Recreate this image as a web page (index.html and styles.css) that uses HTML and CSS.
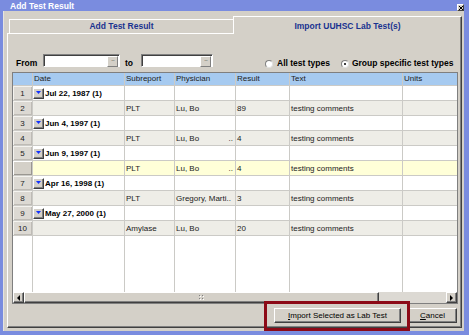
FILE: index.html
```html
<!DOCTYPE html>
<html>
<head>
<meta charset="utf-8">
<title>Add Test Result</title>
<link rel="stylesheet" href="styles.css">
</head>
<body>
<div class="window">
  <div class="titlebar">
    <span class="title">Add Test Result</span>
    <span class="close"><svg width="4" height="4" viewBox="0 0 4 4"><path d="M0 0L4 4M4 0L0 4" stroke="#000" stroke-width="1"/></svg></span>
  </div>
  <div class="body">
    <div class="tabs">
      <div class="tab">Add Test Result</div>
      <div class="tab active">Import UUHSC Lab Test(s)</div>
    </div>
    <div class="panel">
      <div class="filter">
        <span class="lbl from">From</span>
        <span class="datebox w77"><span class="dots">...</span></span>
        <span class="lbl to">to</span>
        <span class="datebox w72"><span class="dots">...</span></span>
        <span class="radio r1"></span><span class="lbl l1">All test types</span>
        <span class="radio r2 on"></span><span class="lbl l2">Group specific test types</span>
      </div>
      <div class="grid">
        <div class="row head">
          <div class="num"></div><div>Date</div><div>Subreport</div><div>Physician</div><div>Result</div><div>Text</div><div>Units</div>
        </div>
        <div class="row grp">
          <div class="num">1</div><div class="date"><span class="dd"><svg width="5" height="3" viewBox="0 0 5 3"><polygon points="0,0 5,0 2.5,3" fill="#1030ff"/></svg></span><b>Jul 22, 1987 (1)</b></div><div></div><div></div><div></div><div></div><div></div>
        </div>
        <div class="row alt">
          <div class="num">2</div><div></div><div>PLT</div><div>Lu, Bo</div><div>89</div><div>testing comments</div><div></div>
        </div>
        <div class="row grp">
          <div class="num">3</div><div class="date"><span class="dd"><svg width="5" height="3" viewBox="0 0 5 3"><polygon points="0,0 5,0 2.5,3" fill="#1030ff"/></svg></span><b>Jun 4, 1997 (1)</b></div><div></div><div></div><div></div><div></div><div></div>
        </div>
        <div class="row alt">
          <div class="num">4</div><div></div><div>PLT</div><div class="phys"><span>Lu, Bo</span><span>..</span></div><div>4</div><div>testing comments</div><div></div>
        </div>
        <div class="row grp">
          <div class="num">5</div><div class="date"><span class="dd"><svg width="5" height="3" viewBox="0 0 5 3"><polygon points="0,0 5,0 2.5,3" fill="#1030ff"/></svg></span><b>Jun 9, 1997 (1)</b></div><div></div><div></div><div></div><div></div><div></div>
        </div>
        <div class="row sel">
          <div class="num"></div><div></div><div>PLT</div><div class="phys"><span>Lu, Bo</span><span>..</span></div><div>4</div><div>testing comments</div><div></div>
        </div>
        <div class="row grp">
          <div class="num">7</div><div class="date"><span class="dd"><svg width="5" height="3" viewBox="0 0 5 3"><polygon points="0,0 5,0 2.5,3" fill="#1030ff"/></svg></span><b>Apr 16, 1998 (1)</b></div><div></div><div></div><div></div><div></div><div></div>
        </div>
        <div class="row alt">
          <div class="num">8</div><div></div><div>PLT</div><div>Gregory, Marti..</div><div>3</div><div>testing comments</div><div></div>
        </div>
        <div class="row grp">
          <div class="num">9</div><div class="date"><span class="dd"><svg width="5" height="3" viewBox="0 0 5 3"><polygon points="0,0 5,0 2.5,3" fill="#1030ff"/></svg></span><b>May 27, 2000 (1)</b></div><div></div><div></div><div></div><div></div><div></div>
        </div>
        <div class="row alt">
          <div class="num">10</div><div></div><div>Amylase</div><div>Lu, Bo</div><div>20</div><div>testing comments</div><div></div>
        </div>
        <div class="filler">
          <div></div><div></div><div></div><div></div><div></div><div></div><div></div>
        </div>
        <div class="hscroll">
          <span class="sbtn"><span class="tri-l"></span></span>
          <span class="thumb"><svg width="5" height="6" viewBox="0 0 5 6"><rect x="0" y="0" width="1" height="1" fill="#808080"/><rect x="3" y="0" width="1" height="1" fill="#808080"/><rect x="0" y="3" width="1" height="1" fill="#808080"/><rect x="3" y="3" width="1" height="1" fill="#808080"/><rect x="1" y="1" width="1" height="1" fill="#fff"/><rect x="4" y="1" width="1" height="1" fill="#fff"/><rect x="1" y="4" width="1" height="1" fill="#fff"/><rect x="4" y="4" width="1" height="1" fill="#fff"/></svg></span>
          <span class="track"></span>
          <span class="sbtn"><span class="tri-r"></span></span>
        </div>
      </div>
      <div class="buttons">
        <div class="btn import"><u>I</u>mport Selected as Lab Test<span class="highlight"></span></div>
        <div class="btn cancel"><u>C</u>ancel</div>
      </div>
    </div>
  </div>
</div>
</body>
</html>
```

FILE: styles.css
```css
* { box-sizing: border-box; }
html, body { margin: 0; padding: 0; }
body {
  width: 469px;
  height: 335px;
  overflow: hidden;
  font-family: "Liberation Sans", Arial, sans-serif;
  font-size: 8px;
  color: #000;
  background: #7a8cdf;
}
.window {
  width: 469px;
  height: 335px;
  background: #7a8cdf;
  display: flex;
  flex-direction: column;
}
.titlebar {
  height: 11px;
  flex: none;
  display: flex;
  align-items: flex-start;
  padding: 0 5px 0 10px;
}
.title {
  color: #fff;
  font-weight: bold;
  font-size: 8.5px;
  line-height: 13px;
}
.close {
  margin-left: auto;
  margin-top: 4px;
  width: 7px;
  height: 7px;
  background: #d4d0c8;
  border: 1px solid;
  border-color: #fff #404040 #404040 #fff;
  display: flex;
  align-items: center;
  justify-content: center;
}
.body {
  flex: 1;
  min-height: 0;
  margin: 0 5px 4px 3px;
  background: #d4d0c8;
  padding: 5px 2px 3px 4px;
  display: flex;
  flex-direction: column;
  box-shadow: inset 1px 0 #e6e4df;
}
.tabs {
  height: 17px;
  flex: none;
  display: flex;
  align-items: flex-end;
  padding-left: 2px;
}
.tab {
  width: 224px;
  height: 14px;
  border-top: 1px solid #fff;
  border-left: 1px solid #fff;
  background: #d4d0c8;
  text-align: center;
  color: #1a3390;
  font-weight: bold;
  font-size: 8.5px;
  line-height: 12px;
  white-space: nowrap;
}
.tab.active {
  position: relative;
  width: 229px;
  height: 18px;
  margin-bottom: -1px;
  padding-top: 3px;
  border-right: 1px solid #404040;
  box-shadow: inset -1px 0 #808080;
}
.panel {
  flex: 1;
  min-height: 0;
  border: 1px solid;
  border-color: #fff #404040 #404040 #fff;
  box-shadow: inset -1px -1px #808080;
  padding: 20px 3px 4px 4px;
  display: flex;
  flex-direction: column;
}
.filter {
  height: 13px;
  flex: none;
  display: flex;
  align-items: flex-start;
  margin-bottom: 5px;
  padding-left: 4px;
}
.lbl {
  font-weight: bold;
  font-size: 8.5px;
  line-height: 14px;
  padding-top: 2px;
  white-space: nowrap;
}
.from { width: 27px; }
.to { margin-left: 5px; width: 16px; }
.datebox {
  height: 13px;
  background: #fff;
  border: 1px solid;
  border-color: #808080 #fff #fff #808080;
  box-shadow: inset 1px 1px #404040;
  display: flex;
  justify-content: flex-end;
  padding: 1px 1px 0 0;
}
.w77 { width: 77px; }
.w72 { width: 72px; }
.dots {
  width: 11px;
  height: 11px;
  background: #d4d0c8;
  border: 1px solid;
  border-color: #fff #808080 #808080 #fff;
  color: #707070;
  font-size: 7px;
  line-height: 4px;
  text-align: center;
  letter-spacing: -1px;
}
.radio {
  width: 8px;
  height: 8px;
  margin-top: 6px;
  border-radius: 50%;
  background: #fff;
  border: 1px solid;
  border-color: #808080 #e0e0e0 #e0e0e0 #808080;
  display: flex;
  align-items: center;
  justify-content: center;
}
.radio.on::after {
  content: "";
  width: 2px;
  height: 2px;
  background: #000;
  border-radius: 1px;
}
.r1 { margin-left: 52px; }
.l1 { margin-left: 4px; }
.r2 { margin-left: 11px; }
.l2 { margin-left: 3px; }
.grid {
  flex: 1;
  min-height: 0;
  border: 1px solid #7f7f7f;
  background: #fff;
  display: flex;
  flex-direction: column;
}
.row, .filler {
  display: grid;
  grid-template-columns: 20px 92px 50px 61px 54px 113px 54px;
}
.row {
  flex: none;
  height: 15px;
  border-bottom: 1px solid #cbcac6;
}
.row > div {
  height: 14px;
  border-right: 1px solid #cbcac6;
  padding-left: 1px;
  line-height: 15px;
  overflow: hidden;
  white-space: nowrap;
  color: #222;
}
.row > div:last-child, .filler > div:last-child { border-right: none; }
.head {
  height: 13px;
  background: #a6caf0;
}
.head > div {
  height: 12px;
  line-height: 12px;
}
.alt { background: #eeede7; }
.sel { background: #ffffd8; }
.row > .num {
  padding-left: 0;
  text-align: center;
  background: #dcd9d3;
  box-shadow: inset 1px 1px #f4f3ef, inset -1px -1px #bebbb5;
}
.head > .num {
  background: #a6caf0;
  box-shadow: none;
}
.sel > .num {
  background: #d4d0c8;
  box-shadow: inset 1px 1px #fff, inset -1px -1px #9a9791;
}
.row > .date {
  padding-left: 0;
  display: flex;
  align-items: flex-start;
  color: #000;
}
.dd {
  flex: none;
  width: 11px;
  height: 11px;
  margin: 2px 1px 0 0;
  background: #d4d0c8;
  border: 1px solid;
  border-color: #fff #404040 #404040 #fff;
  box-shadow: inset -1px -1px #808080;
  display: flex;
  justify-content: center;
  padding: 2px 1px 0 0;
}
.dd svg { display: block; }
.row > .phys {
  display: flex;
  justify-content: space-between;
  padding-right: 2px;
}
.filler {
  flex: 1;
  min-height: 0;
}
.filler > div { border-right: 1px solid #cbcac6; }
.hscroll {
  flex: none;
  height: 11px;
  display: flex;
  background: #d4d0c8;
}
.sbtn, .thumb {
  height: 11px;
  background: #d4d0c8;
  border: 1px solid;
  border-color: #fff #404040 #404040 #fff;
  box-shadow: inset -1px -1px #808080;
  display: flex;
  align-items: center;
  justify-content: center;
}
.sbtn { width: 11px; flex: none; }
.thumb { width: 355px; flex: none; }
.track { flex: 1; background: #dcd9d3; }
.tri-l {
  width: 0;
  height: 0;
  border-top: 3px solid transparent;
  border-bottom: 3px solid transparent;
  border-right: 3px solid #000;
}
.tri-r {
  width: 0;
  height: 0;
  border-top: 3px solid transparent;
  border-bottom: 3px solid transparent;
  border-left: 3px solid #000;
}
.buttons {
  flex: none;
  height: 15px;
  margin-top: 4px;
  display: flex;
  justify-content: flex-end;
  gap: 7px;
  padding-right: 1px;
}
.btn {
  height: 15px;
  background: #d4d0c8;
  border: 1px solid;
  border-color: #fff #404040 #404040 #fff;
  box-shadow: inset -1px -1px #808080;
  text-align: center;
  font-size: 8px;
  line-height: 14px;
  color: #000;
  white-space: nowrap;
}
.import { width: 127px; position: relative; }
.cancel { width: 49px; }
.highlight {
  position: absolute;
  left: -11px;
  top: -8px;
  right: -10px;
  bottom: -9px;
  border: 3px solid #8c0a17;
}
```
